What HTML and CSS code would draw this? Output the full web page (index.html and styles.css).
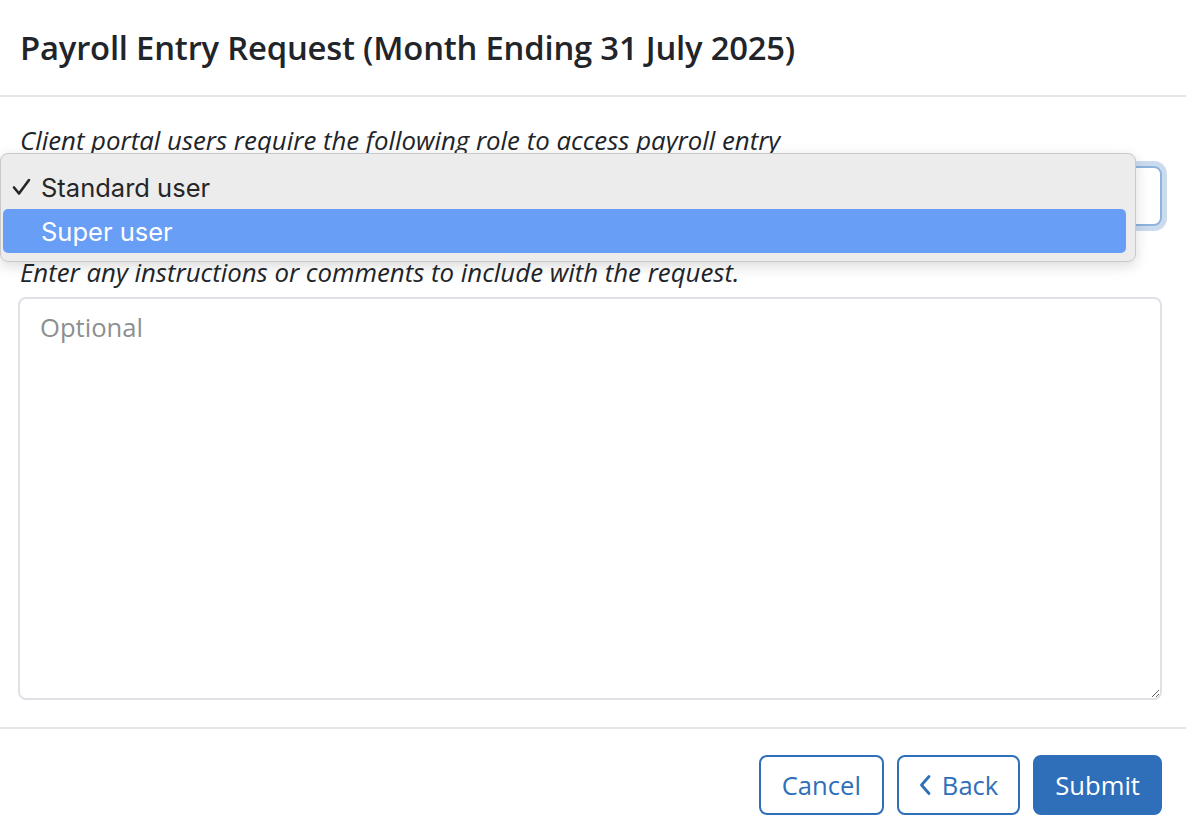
FILE: index.html
```html
<!DOCTYPE html>
<html lang="en">
<head>
    <meta charset="UTF-8">
    <meta name="viewport" content="width=device-width, initial-scale=1.0">
    <title>Payroll Entry Request</title>
    <link rel="stylesheet" href="styles.css">
</head>
<body>
    <div class="modal">
        <div class="modal-header">
            <h1>Payroll Entry Request (Month Ending 31 July 2025)</h1>
        </div>

        <div class="modal-body">
            <p class="hint">Client portal users require the following role to access payroll entry</p>
            <div class="select-box"></div>

            <p class="hint second">Enter any instructions or comments to include with the request.</p>
            <textarea class="comments" placeholder="Optional"></textarea>
        </div>

        <div class="modal-footer">
            <button class="btn btn-outline">Cancel</button>
            <button class="btn btn-outline">
                <svg class="chev" width="12" height="24" viewBox="0 0 12 24"><path d="M10 3.5 L2.5 12 L10 20.5" fill="none" stroke="currentColor" stroke-width="2.8" stroke-linecap="round" stroke-linejoin="round"/></svg>
                Back
            </button>
            <button class="btn btn-primary">Submit</button>
        </div>

        <!-- native select popup, open -->
        <div class="popup">
            <div class="popup-item">
                <span class="tick"><svg width="19" height="18" viewBox="0 0 19 18"><path d="M2 9.5 L7 15.5 L17 2" fill="none" stroke="currentColor" stroke-width="2.6" stroke-linecap="round" stroke-linejoin="round"/></svg></span>Standard user
            </div>
            <div class="popup-item active"><span class="tick"></span>Super user</div>
        </div>
    </div>
</body>
</html>
```

FILE: styles.css
```css
body {
    margin: 0;
    font-family: 'Open Sans', sans-serif;
    color: #212529;
    background: #fff;
}

.modal {
    position: relative;
    width: 1186px;
    height: 838px;
    overflow: hidden;
}

.modal-header {
    height: 95px;
    display: flex;
    align-items: center;
    padding: 0 20px;
    border-bottom: 2px solid #e2e5e9;
}

h1 {
    margin: 0;
    font-size: 32.8px;
    font-weight: 600;
    letter-spacing: -0.2px;
}

.modal-body {
    padding: 24px 24px 27px 18px;
}

.hint {
    margin: 0 0 0 2px;
    font-size: 25.8px;
    line-height: 38px;
    font-style: italic;
}

.hint.second {
    margin-top: 27px;
}

.select-box {
    margin-top: 7px;
    height: 56px;
    border: 2px solid #8db3df;
    border-radius: 8px;
    box-shadow: 0 0 0 5px rgba(47, 111, 186, 0.25);
}

.comments {
    display: block;
    box-sizing: border-box;
    margin-top: 6px;
    width: 1144px;
    height: 403px;
    border: 2px solid #dee2e6;
    border-radius: 8px;
    padding: 10px 20px;
    font-family: 'Open Sans', sans-serif;
    font-size: 25.6px;
    line-height: 38px;
    color: #212529;
    resize: vertical;
}

.comments::placeholder {
    color: #8c8f92;
}

.modal-footer {
    display: flex;
    justify-content: flex-end;
    gap: 13px;
    padding: 26px 24px 0 0;
    border-top: 2px solid #e2e5e9;
}

.btn {
    height: 60px;
    padding: 0 20px;
    font-family: 'Open Sans', sans-serif;
    font-size: 25.6px;
    border-radius: 8px;
    border: 2px solid #2f6fba;
    display: flex;
    align-items: center;
    gap: 11px;
    cursor: pointer;
}

.btn-outline {
    background: #fff;
    color: #2f6fba;
}

.btn-outline:first-child {
    padding: 0 21px;
}

.btn-primary {
    background: #2f6fba;
    color: #fff;
}

.popup {
    position: absolute;
    left: 0;
    top: 153px;
    width: 1136px;
    height: 109px;
    box-sizing: border-box;
    background: #ececec;
    border: 1px solid #c9c9c9;
    border-radius: 8px;
    box-shadow: 0 4px 14px rgba(0, 0, 0, 0.15);
    padding: 11px 9px 0 2px;
    font-family: Inter, 'Liberation Sans', sans-serif;
    font-size: 25.5px;
}

.popup-item {
    height: 44px;
    display: flex;
    align-items: center;
    border-radius: 5px;
    color: #262626;
}

.popup-item.active {
    background: #689ef6;
    color: #fff;
}

.tick {
    width: 38px;
    padding-left: 9px;
    box-sizing: border-box;
    display: flex;
    align-items: center;
}
```
